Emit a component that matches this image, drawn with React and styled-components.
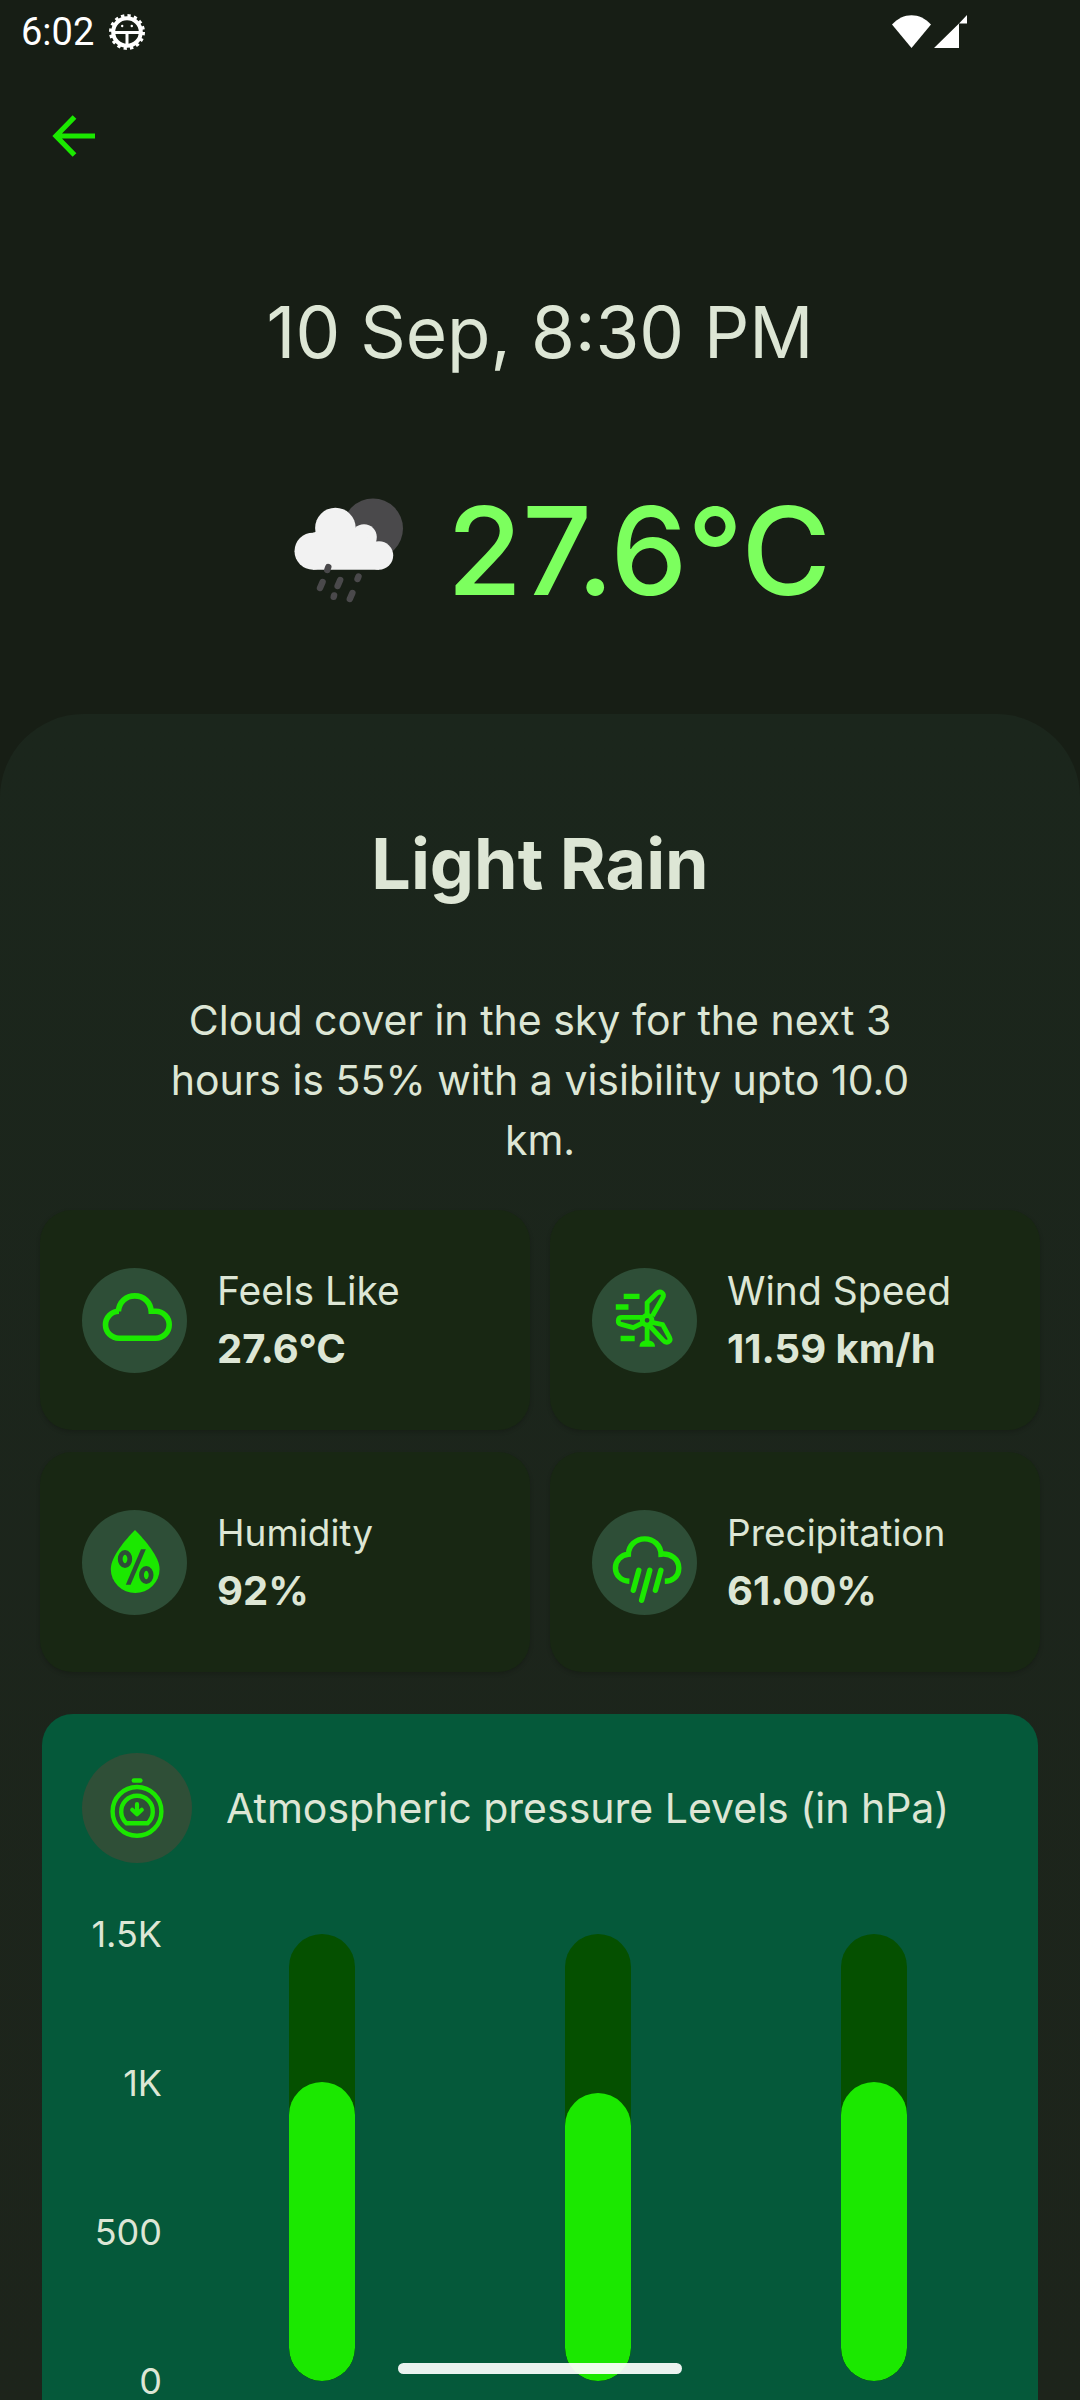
import React from 'react';
import styled, { createGlobalStyle } from 'styled-components';

const GlobalStyle = createGlobalStyle`
  *, *::before, *::after { box-sizing: border-box; }
  body {
    margin: 0;
    background: #171e15;
    color: #dde6d5;
    font-family: Inter, Roboto, sans-serif;
    font-weight: 400;
  }
`;

const Screen = styled.div`
  display: flex;
  flex-direction: column;
  height: 100vh;
  overflow: hidden;
`;

const StatusBar = styled.header`
  display: flex;
  align-items: center;
  gap: 14px;
  height: 64px;
  padding: 0 112px 0 21px;
  color: #fff;
  font-family: Roboto, sans-serif;
  font-size: 38px;
  line-height: 64px;
  flex: none;
`;

const SignalIcons = styled.svg`
  margin-left: auto;
`;

const Toolbar = styled.nav`
  display: flex;
  align-items: center;
  height: 144px;
  padding: 0 42px;
  flex: none;
`;

const BackButton = styled.button`
  display: grid;
  place-items: center;
  width: 64px;
  height: 64px;
  padding: 0;
  border: 0;
  background: none;
  color: #1be800;
  cursor: pointer;
`;

const Summary = styled.section`
  display: flex;
  flex-direction: column;
  align-items: center;
  gap: 94px;
  padding: 74px 24px 88px;
  flex: none;
`;

const DateText = styled.time`
  font-size: 71px;
  line-height: 100px;
`;

const Current = styled.div`
  display: flex;
  align-items: center;
  gap: 29px;
`;

const Temperature = styled.span`
  color: #7cff5e;
  font-size: 122px;
  font-weight: 500;
  line-height: 150px;
`;

const Panel = styled.main`
  display: flex;
  flex-direction: column;
  flex: 1;
  min-height: 0;
  padding-top: 100px;
  border-radius: 84px 84px 0 0;
  background: linear-gradient(#1b261c, #1d241b);
`;

const Heading = styled.h1`
  margin: 0;
  font-size: 70px;
  font-weight: 700;
  line-height: 100px;
  text-align: center;
`;

const Description = styled.p`
  margin: 76px 160px 0;
  font-size: 41px;
  line-height: 60px;
  text-align: center;
`;

const Metrics = styled.section`
  display: grid;
  grid-template-columns: 1fr 1fr;
  gap: 22px 20px;
  padding: 40px 40px 42px;
`;

const MetricCard = styled.article`
  display: flex;
  align-items: center;
  gap: 30px;
  height: 220px;
  padding: 0 42px;
  border-radius: 32px;
  background: #182713;
  box-shadow: 0 2px 4px rgba(0, 0, 0, 0.18);
`;

const MetricText = styled.div`
  display: flex;
  flex-direction: column;
`;

const MetricLabel = styled.span`
  font-size: ${(p) => (p.$compact ? 37 : 39)}px;
  line-height: 58px;
`;

const MetricValue = styled.strong`
  font-size: 40px;
  font-weight: 700;
  line-height: 58px;
`;

const Badge = styled.span`
  display: grid;
  place-items: center;
  width: ${(p) => p.$size}px;
  height: ${(p) => p.$size}px;
  border-radius: 50%;
  background: ${(p) => p.$tone};
  color: #1be800;
  flex: none;
`;

const ChartCard = styled.section`
  flex: 1;
  min-height: 0;
  margin: 0 42px;
  padding: 39px 26px 0 40px;
  border-radius: 31px 31px 0 0;
  background: #05593a;
`;

const ChartHeader = styled.div`
  display: flex;
  align-items: center;
  gap: 34px;
  margin-bottom: 55px;
`;

const ChartTitle = styled.h2`
  margin: 0;
  font-size: 41px;
  font-weight: 400;
  line-height: 60px;
`;

const Chart = styled.div`
  display: flex;
  gap: 22px;
`;

const Axis = styled.div`
  display: flex;
  flex-direction: column;
  justify-content: space-between;
  width: 80px;
  height: 479px;
  font-size: 36px;
  line-height: 32px;
  text-align: right;
`;

const Bars = styled.div`
  display: flex;
  justify-content: space-around;
  flex: 1;
  height: 447px;
  margin-top: 16px;
`;

const Track = styled.div`
  display: flex;
  align-items: flex-end;
  width: 66px;
  border-radius: 33px;
  background: #055000;
  overflow: hidden;
`;

const Fill = styled.div`
  width: 100%;
  border-radius: 33px;
  background: #1be800;
`;

const HomeIndicator = styled.div`
  position: fixed;
  bottom: 26px;
  left: 50%;
  width: 284px;
  height: 11px;
  margin-left: -142px;
  border-radius: 6px;
  background: rgba(255, 255, 255, 0.92);
`;

const GearIcon = () => (
  <svg width="38" height="38" viewBox="0 0 38 38" fill="none" stroke="#fff" aria-hidden="true">
    <circle cx="19" cy="19" r="16" strokeWidth="4" strokeDasharray="3.2 3.08" />
    <circle cx="19" cy="19" r="13.8" strokeWidth="4" />
    <path d="M6 19.4H32M19 20V32" strokeWidth="3" />
    <circle cx="14.2" cy="13" r="1.2" fill="#fff" stroke="none" />
    <circle cx="23.8" cy="13" r="1.2" fill="#fff" stroke="none" />
  </svg>
);

const BackIcon = () => (
  <svg width="44" height="44" viewBox="0 0 44 44" fill="none" stroke="currentColor" strokeWidth="5.2" aria-hidden="true">
    <path d="M22.5 3L4 22L22.5 41M4 22H43" />
  </svg>
);

const NightRainIcon = () => (
  <svg width="169" height="140" viewBox="-4 0 169 140" aria-hidden="true">
    <circle cx="120" cy="47.5" r="30" fill="#4a494b" />
    <g fill="#f2f2f2">
      <circle cx="82.4" cy="47" r="20.3" />
      <circle cx="111" cy="56" r="12.8" />
      <circle cx="126" cy="74.5" r="14.2" />
      <circle cx="60" cy="70.2" r="18.5" />
      <path d="M60 51.7L82 45L111 55L126 62V88.7H60Z" />
    </g>
    <g stroke="#4a494b" strokeWidth="6.4" strokeLinecap="round">
      <path d="M74.3 89L75.3 86M67 107L69.6 101M84.6 105L87.2 99M104.5 98L105.5 95.5M80.7 115.8L81.1 114.4M96.8 118L99.4 112" />
    </g>
  </svg>
);

const CloudIcon = () => (
  <svg width="105" height="105" viewBox="0 0 105 105" fill="none" stroke="currentColor" strokeWidth="5.6" aria-hidden="true">
    <path d="M37 70.3A13.5 13.5 0 0 1 37 43.3H36.4C37 34 44 27.9 52.8 27.9S68.6 34 69.2 43.3H73.7A13.5 13.5 0 0 1 73.7 70.3Z" />
  </svg>
);

const TurbineIcon = () => (
  <svg width="105" height="105" viewBox="0 0 105 105" fill="none" stroke="currentColor" strokeWidth="4.8" aria-hidden="true">
    <path d="M31.7 28.4H47.5M23.8 39H36.5M28.6 70.5H42.7" strokeWidth="5.3" />
    <circle cx="55.1" cy="52.3" r="4.8" />
    <path d="M55.1 47V34.7L64.6 25.6C68.4 22 73.2 25.4 70.6 30L60.4 48" />
    <path d="M51 49.4H30C25.2 49.4 25 55.4 29.4 56.4L41.2 59.6L50.5 55" />
    <path d="M60 54.4L70.6 56.6L77.4 69C79.6 73.6 74.6 76.2 71.2 72.4L57.4 57.5" />
    <path d="M55.1 57V75" />
    <path d="M47.5 78.7C47.5 75.4 49.8 72.8 53 72.8H57.4C60.6 72.8 63 75.4 63 78.7Z" fill="currentColor" stroke="none" />
  </svg>
);

const HumidityIcon = () => (
  <svg width="105" height="105" viewBox="0 0 105 105" fill="none" aria-hidden="true">
    <path d="M53 20C63 30 77.6 47 77.6 59A24.4 24 0 0 1 28.8 59C28.8 47 43 30 53 20Z" fill="currentColor" />
    <g stroke="#2e4e37" strokeWidth="4.8">
      <ellipse cx="43" cy="49" rx="4.8" ry="6.6" />
      <ellipse cx="64.3" cy="65" rx="4.8" ry="6.6" />
    </g>
    <path d="M59 39.3H63.8L48.6 74.8H43.8Z" fill="#2e4e37" />
  </svg>
);

const RainIcon = () => (
  <svg width="105" height="105" viewBox="0 0 105 105" fill="none" stroke="currentColor" strokeWidth="5.4" aria-hidden="true">
    <path d="M37.4 71.3C29 71 23.4 65 23.4 58S29 44.8 36.4 44.2C36.6 35.6 43.6 28.9 52.7 28.9S68.8 35.6 69 44.2C79 43 86.8 49 86.8 58S80 71.2 72.8 71.3" />
    <path d="M46.8 60.3L41.3 80.3M57.8 60.3L49.6 90.3M68.9 60.3L63.4 80.3" strokeLinecap="round" />
  </svg>
);

const PressureIcon = () => (
  <svg width="110" height="110" viewBox="0 0 110 110" fill="none" stroke="currentColor" strokeWidth="4.4" strokeLinejoin="round" strokeLinecap="round" aria-hidden="true">
    <circle cx="55" cy="58.4" r="24.4" />
    <path d="M51.8 27.5H58.4" />
    <path d="M44.5 70.3A15.8 15.8 0 1 1 65.5 70.3Z" />
    <path d="M55 51.2V61M50.2 56.8L55 61.2L59.8 56.8" strokeWidth="4.2" />
  </svg>
);

const metrics = [
  { label: 'Feels Like', value: '27.6°C', Icon: CloudIcon },
  { label: 'Wind Speed', value: '11.59 km/h', Icon: TurbineIcon },
  { label: 'Humidity', value: '92%', Icon: HumidityIcon, compact: true },
  { label: 'Precipitation', value: '61.00%', Icon: RainIcon, compact: true },
];

const pressures = [1003, 967, 1003];
const ticks = ['1.5K', '1K', '500', '0'];

export default function App() {
  return (
    <Screen>
      <GlobalStyle />
      <StatusBar>
        <span>6:02</span>
        <GearIcon />
        <SignalIcons width="76" height="34" viewBox="0 0 76 34" fill="#fff" aria-hidden="true">
          <path d="M0 9.5C11 -3 28 -3 39 9.5L19.5 33Z" />
          <path d="M42 33L67 8.5V33ZM67 8.5L75 0V8.5Z" />
        </SignalIcons>
      </StatusBar>
      <Toolbar>
        <BackButton type="button" aria-label="Back">
          <BackIcon />
        </BackButton>
      </Toolbar>
      <Summary>
        <DateText>10 Sep, 8:30 PM</DateText>
        <Current>
          <NightRainIcon />
          <Temperature>27.6°C</Temperature>
        </Current>
      </Summary>
      <Panel>
        <Heading>Light Rain</Heading>
        <Description>
          Cloud cover in the sky for the next 3 hours is 55% with a visibility upto 10.0 km.
        </Description>
        <Metrics>
          {metrics.map(({ label, value, Icon, compact }) => (
            <MetricCard key={label}>
              <Badge $size={105} $tone="#2e4e37">
                <Icon />
              </Badge>
              <MetricText>
                <MetricLabel $compact={compact}>{label}</MetricLabel>
                <MetricValue>{value}</MetricValue>
              </MetricText>
            </MetricCard>
          ))}
        </Metrics>
        <ChartCard>
          <ChartHeader>
            <Badge $size={110} $tone="#2f4f37">
              <PressureIcon />
            </Badge>
            <ChartTitle>Atmospheric pressure Levels (in hPa)</ChartTitle>
          </ChartHeader>
          <Chart>
            <Axis>
              {ticks.map((tick) => (
                <span key={tick}>{tick}</span>
              ))}
            </Axis>
            <Bars>
              {pressures.map((value, i) => (
                <Track key={i}>
                  <Fill style={{ height: `${(value / 1500) * 100}%` }} />
                </Track>
              ))}
            </Bars>
          </Chart>
        </ChartCard>
      </Panel>
      <HomeIndicator />
    </Screen>
  );
}
